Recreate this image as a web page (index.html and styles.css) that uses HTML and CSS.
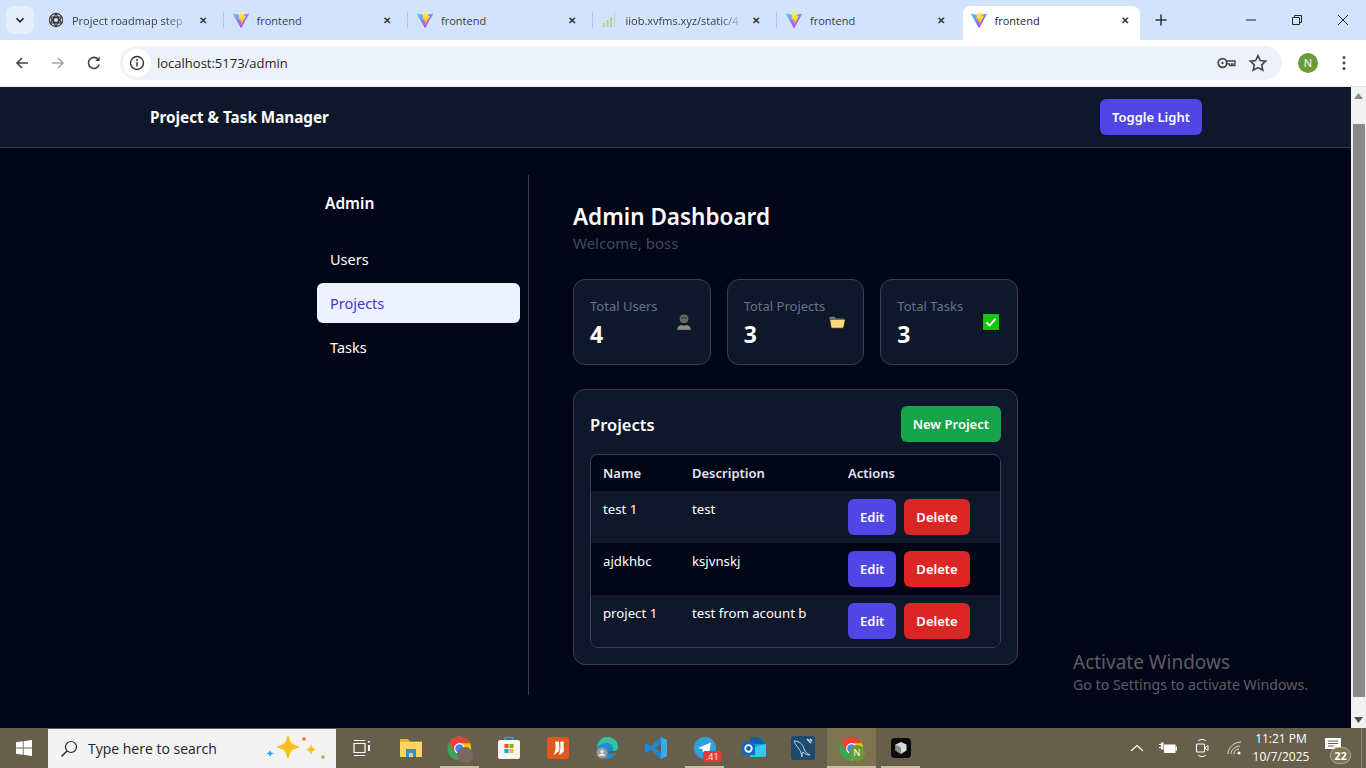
FILE: index.html
```html
<!DOCTYPE html>
<html lang="en">
<head>
    <meta charset="UTF-8">
    <meta name="viewport" content="width=device-width, initial-scale=1.0">
    <title>frontend</title>
    <link rel="stylesheet" href="styles.css">
</head>
<body>
    <svg class="defs" width="0" height="0">
        <defs>
            <linearGradient id="viteA" x1="0" y1="0" x2="0.6" y2="1">
                <stop offset="0" stop-color="#41d1ff"/>
                <stop offset="1" stop-color="#bd34fe"/>
            </linearGradient>
            <linearGradient id="viteB" x1="0.4" y1="0" x2="0.5" y2="1">
                <stop offset="0" stop-color="#ffea83"/>
                <stop offset="0.4" stop-color="#ffdd35"/>
                <stop offset="1" stop-color="#ffa800"/>
            </linearGradient>
            <symbol id="vite" viewBox="0 0 256 257">
                <path fill="url(#viteA)" d="M255.153 37.938L134.897 252.976c-2.483 4.44-8.862 4.466-11.382.048L.875 37.958c-2.746-4.814 1.371-10.646 6.827-9.67l120.385 21.517a6.537 6.537 0 002.322-.004l117.867-21.483c5.438-.991 9.574 4.796 6.877 9.62z"/>
                <path fill="url(#viteB)" d="M185.432.063L96.44 17.501a3.268 3.268 0 00-2.634 3.014l-5.474 92.456a3.268 3.268 0 003.997 3.378l24.777-5.718c2.318-.535 4.413 1.507 3.936 3.838l-7.361 36.047c-.495 2.426 1.782 4.5 4.151 3.78l15.304-4.649c2.372-.72 4.652 1.36 4.15 3.788l-11.698 56.621c-.732 3.542 3.979 5.473 5.943 2.437l1.313-2.028 72.516-144.72c1.215-2.423-.88-5.186-3.54-4.672l-25.505 4.922c-2.396.462-4.435-1.77-3.759-4.114l16.646-57.705c.677-2.35-1.37-4.583-3.769-4.113z"/>
            </symbol>
            <symbol id="chromeLogo" viewBox="0 0 24 24">
                <circle cx="12" cy="12" r="11.5" fill="#34a853"/>
                <path fill="#ea4335" d="M12 .5A11.5 11.5 0 002 6.3l5 8.7L12 7h10A11.5 11.5 0 0012 .5z"/>
                <path fill="#fbbc04" d="M22 7H12l3.5 6-3.5 10.5A11.5 11.5 0 0022 7z"/>
                <circle cx="12" cy="12" r="5.2" fill="#fff"/>
                <circle cx="12" cy="12" r="4.1" fill="#4285f4"/>
            </symbol>
        </defs>
    </svg>

    <div class="tabstrip">
        <div class="tab-menu">
            <svg width="10" height="10" viewBox="0 0 10 10"><path d="M1.5 3.2L5 6.8l3.5-3.6" fill="none" stroke="#1f1f1f" stroke-width="1.6"/></svg>
        </div>
        <div class="tab">
            <svg class="favicon" viewBox="0 0 16 16"><g fill="none" stroke="#333" stroke-width="1.1"><circle cx="8" cy="8" r="6.6"/><path d="M8 1.5l5.5 9.5H2.5zM8 14.5L2.5 5h11z"/><circle cx="8" cy="8" r="2.6"/></g></svg>
            <span class="tab-title tab-fade">Project roadmap step</span>
            <span class="tab-close">✕</span>
        </div>
        <div class="tab tab-sep">
            <svg class="favicon"><use href="#vite"/></svg>
            <span class="tab-title">frontend</span>
            <span class="tab-close">✕</span>
        </div>
        <div class="tab tab-sep">
            <svg class="favicon"><use href="#vite"/></svg>
            <span class="tab-title">frontend</span>
            <span class="tab-close">✕</span>
        </div>
        <div class="tab tab-sep">
            <svg class="favicon" viewBox="0 0 16 16"><g fill="#a9d3a0"><rect x="1" y="11" width="2" height="4"/><rect x="4.5" y="8" width="2" height="7"/><rect x="8" y="5" width="2" height="10"/><rect x="11.5" y="1" width="2" height="14" fill="#c6dcc2"/></g></svg>
            <span class="tab-title tab-fade">iiob.xvfms.xyz/static/4</span>
            <span class="tab-close">✕</span>
        </div>
        <div class="tab tab-sep">
            <svg class="favicon"><use href="#vite"/></svg>
            <span class="tab-title">frontend</span>
            <span class="tab-close">✕</span>
        </div>
        <div class="tab tab-active">
            <svg class="favicon"><use href="#vite"/></svg>
            <span class="tab-title">frontend</span>
            <span class="tab-close">✕</span>
        </div>
        <div class="tab-new">
            <svg width="12" height="12" viewBox="0 0 12 12"><path d="M6 .5v11M.5 6h11" stroke="#333" stroke-width="1.5"/></svg>
        </div>
        <div class="win-controls">
            <svg width="46" height="16" viewBox="0 0 46 16"><path d="M18 8h10" stroke="#222" stroke-width="1"/></svg>
            <svg width="46" height="16" viewBox="0 0 46 16"><path d="M18.5 5.5h7v7h-7zM20.5 5.5v-2h7v7h-2" fill="none" stroke="#222" stroke-width="1"/></svg>
            <svg width="46" height="16" viewBox="0 0 46 16"><path d="M18 3l10 10M28 3L18 13" stroke="#222" stroke-width="1"/></svg>
        </div>
    </div>

    <div class="toolbar">
        <svg class="nav-icon" viewBox="0 0 16 16"><path d="M14 8H3M8 3L3 8l5 5" fill="none" stroke="#444" stroke-width="1.6"/></svg>
        <svg class="nav-icon" viewBox="0 0 16 16"><path d="M2 8h11M8 3l5 5-5 5" fill="none" stroke="#a6a6a6" stroke-width="1.6"/></svg>
        <svg class="nav-icon" viewBox="0 0 16 16"><path d="M13.2 9.5A5.5 5.5 0 1112 4.2" fill="none" stroke="#444" stroke-width="1.6"/><path d="M13.6 1.5v4.4H9.2z" fill="#444"/></svg>
        <div class="omnibox">
            <span class="site-info">
                <svg width="16" height="16" viewBox="0 0 16 16"><circle cx="8" cy="8" r="6.5" fill="none" stroke="#333" stroke-width="1.4"/><path d="M8 7v4.5" stroke="#333" stroke-width="1.5"/><circle cx="8" cy="4.9" r="1" fill="#333"/></svg>
            </span>
            <span class="url">localhost:5173/admin</span>
            <svg class="omni-icon" viewBox="0 0 20 20"><circle cx="6.5" cy="10" r="4.3" fill="none" stroke="#444" stroke-width="1.7"/><circle cx="6.5" cy="10" r="1.2" fill="#444"/><path d="M10.5 8h8.5v4.5h-2V11h-1.5v1.5h-2V10.8h-3z" fill="none" stroke="#444" stroke-width="1.3"/></svg>
            <svg class="omni-icon" viewBox="0 0 20 20"><path d="M10 2.6l2.3 5 5.4.6-4 3.7 1.1 5.4L10 14.6l-4.8 2.7 1.1-5.4-4-3.7 5.4-.6z" fill="none" stroke="#444" stroke-width="1.6"/></svg>
        </div>
        <span class="avatar">N</span>
        <svg class="kebab" viewBox="0 0 4 16"><circle cx="2" cy="2.5" r="1.5"/><circle cx="2" cy="8" r="1.5"/><circle cx="2" cy="13.5" r="1.5"/></svg>
    </div>

    <div class="viewport">
        <div class="page">
            <header class="topbar">
                <div class="brand">Project &amp; Task Manager</div>
                <button class="btn btn-indigo">Toggle Light</button>
            </header>
            <div class="layout">
                <aside class="sidebar">
                    <div class="side-title">Admin</div>
                    <nav class="side-nav">
                        <a class="side-link">Users</a>
                        <a class="side-link side-link-active">Projects</a>
                        <a class="side-link">Tasks</a>
                    </nav>
                </aside>
                <main class="content">
                    <h1>Admin Dashboard</h1>
                    <p class="welcome">Welcome, boss</p>
                    <section class="stats">
                        <div class="stat">
                            <div>
                                <div class="stat-label">Total Users</div>
                                <div class="stat-value">4</div>
                            </div>
                            <svg class="stat-icon" viewBox="0 0 16 16"><circle cx="8" cy="5.2" r="4.4" fill="#666" stroke="#111" stroke-width=".8"/><path d="M1.5 15.4c0-1 .2-4.4 4-5.2 1.5.8 3.5.8 5 0 3.8.8 4 4.2 4 5.2z" fill="#8a8a8a" stroke="#111" stroke-width=".8"/><path d="M5.2 4.4h5.6" stroke="#333" stroke-width="1"/></svg>
                        </div>
                        <div class="stat">
                            <div>
                                <div class="stat-label">Total Projects</div>
                                <div class="stat-value">3</div>
                            </div>
                            <svg class="stat-icon" viewBox="0 0 16 16"><path d="M1 3h5l1 1.5h7v2H1z" fill="#4f8fb0" stroke="#111" stroke-width=".6"/><path d="M1.5 5.5H15.5L13.8 13.5H2.8z" fill="#fdd77a" stroke="#111" stroke-width=".6"/></svg>
                        </div>
                        <div class="stat">
                            <div>
                                <div class="stat-label">Total Tasks</div>
                                <div class="stat-value">3</div>
                            </div>
                            <svg class="stat-icon" viewBox="0 0 16 16"><rect x=".5" y=".5" width="15" height="15" fill="#16c60c" stroke="#0b0b0b" stroke-width=".8"/><path d="M4 8.3l2.8 2.7L12 5.3" fill="none" stroke="#fff" stroke-width="1.6"/></svg>
                        </div>
                    </section>
                    <section class="panel">
                        <div class="panel-head">
                            <h2>Projects</h2>
                            <button class="btn btn-green">New Project</button>
                        </div>
                        <div class="table-wrap">
                            <table>
                                <thead>
                                    <tr><th class="col-name">Name</th><th class="col-desc">Description</th><th>Actions</th></tr>
                                </thead>
                                <tbody>
                                    <tr>
                                        <td>test 1</td>
                                        <td>test</td>
                                        <td><button class="btn btn-indigo">Edit</button><button class="btn btn-red">Delete</button></td>
                                    </tr>
                                    <tr>
                                        <td>ajdkhbc</td>
                                        <td>ksjvnskj</td>
                                        <td><button class="btn btn-indigo">Edit</button><button class="btn btn-red">Delete</button></td>
                                    </tr>
                                    <tr>
                                        <td>project 1</td>
                                        <td>test from acount b</td>
                                        <td><button class="btn btn-indigo">Edit</button><button class="btn btn-red">Delete</button></td>
                                    </tr>
                                </tbody>
                            </table>
                        </div>
                    </section>
                </main>
            </div>
        </div>
        <div class="scrollbar">
            <div class="sb-arrow">
                <svg width="9" height="6" viewBox="0 0 9 6"><path d="M4.5 0L9 6H0z" fill="#8a8a8a"/></svg>
            </div>
            <div class="sb-track"><div class="sb-thumb"></div></div>
            <div class="sb-arrow">
                <svg width="9" height="6" viewBox="0 0 9 6"><path d="M4.5 6L9 0H0z" fill="#505050"/></svg>
            </div>
        </div>
        <div class="watermark">
            <div class="wm-title">Activate Windows</div>
            <div class="wm-sub">Go to Settings to activate Windows.</div>
        </div>
    </div>

    <div class="taskbar">
        <div class="start">
            <svg width="16" height="16" viewBox="0 0 16 16"><path fill="#fff" d="M0 2.3l6.8-1v6.3H0zM7.6 1.2L16 0v7.6H7.6zM0 8.4h6.8v6.3l-6.800-1zM7.6 8.4H16V16l-8.400-1.200z"/></svg>
        </div>
        <div class="search">
            <svg width="18" height="18" viewBox="0 0 18 18"><circle cx="11" cy="7" r="5.5" fill="none" stroke="#222" stroke-width="1.2"/><path d="M7 11l-5.5 5.5" stroke="#222" stroke-width="1.4"/></svg>
            <span class="search-text">Type here to search</span>
            <svg class="search-art" width="62" height="28" viewBox="0 0 62 28">
                <path fill="#fbbf1d" stroke="#fbbf1d" stroke-width="1.5" stroke-linejoin="round" d="M23 1.5c1.5 7 3.5 9 10.5 10.5-7 1.500-9 3.500-10.500 10.500-1.500-7-3.500-9-10.500-10.500 7-1.500 9-3.500 10.500-10.500z"/>
                <path fill="#fbbf1d" d="M46 9c.7 3 1.600 4 5 5.500-3.400 1.500-4.300 2.500-5 5.500-.7-3-1.600-4-5-5.500 3.400-1.500 4.300-2.500 5-5.500z"/>
                <path fill="#26a9ef" d="M5 15c.5 2 1 2.700 4 3.500-3 .8-3.500 1.500-4 3.500-.5-2-1-2.700-4-3.500 3-.8 3.500-1.500 4-3.500z"/>
                <circle cx="39" cy="4" r="1.8" fill="#e8623a"/>
                <circle cx="58" cy="22" r="1.8" fill="#8cc63f"/>
            </svg>
        </div>
        <div class="tb-apps">
            <div class="tb-app">
                <svg width="20" height="20" viewBox="0 0 20 20"><g fill="none" stroke="#fff" stroke-width="1.2"><path d="M2 5.5h11v9H2zM2 2.5h11M2 17.5h11"/></g><path d="M16 3h2v1.500h-2zM16 7h2v6h-2z" fill="#fff"/></svg>
            </div>
            <div class="tb-app">
                <svg width="24" height="20" viewBox="0 0 24 20"><path d="M1 1h8l2 2.500h12V8H1z" fill="#e8b33c"/><path d="M1 4h22v15H1z" fill="#fcd462"/><path d="M7 11h10v8H7z" fill="#2b8fd8"/><path d="M10 15h4v4h-4z" fill="#fcd462"/></svg>
            </div>
            <div class="tb-app tb-open">
                <svg width="25" height="25"><use href="#chromeLogo"/></svg>
                <span class="tb-face"></span>
            </div>
            <div class="tb-app">
                <svg width="24" height="24" viewBox="0 0 24 24"><path d="M8 4V2.500a1 1 0 011-1h6a1 1 0 011 1V4" fill="none" stroke="#27a9e0" stroke-width="1.5"/><rect x="1" y="4" width="22" height="19" rx="2" fill="#f5f5f5"/><rect x="7.5" y="8" width="4" height="4" fill="#f25022"/><rect x="12.5" y="8" width="4" height="4" fill="#7fba00"/><rect x="7.5" y="13" width="4" height="4" fill="#00a4ef"/><rect x="12.5" y="13" width="4" height="4" fill="#ffb900"/></svg>
            </div>
            <div class="tb-app">
                <svg width="22" height="22" viewBox="0 0 22 22"><rect width="22" height="22" rx="2" fill="#dd5a1c"/><path d="M6 18c3-3 3-9 2-13 2-1 3-1 4 0 0 3 1 6 0 9-2 2-4 3-6 4zM13 5c2-1 3-1 4 0-1 4 0 7 0 9-1 2-3 3-5 4 1-4 2-9 1-13z" fill="#fdf3ec"/></svg>
            </div>
            <div class="tb-app">
                <svg width="24" height="24" viewBox="0 0 24 24"><path d="M2 11C3 4 8 1 12 1c6 0 11 4 11 10 0 3-2 4-5 4h-6c1 3 5 4 9 2-2 4-6 6-9 6C6 23 1 18 2 11z" fill="#1f8dd6"/><path d="M2 11C3 4 8 1 12 1c6 0 11 4 11 10 0 3-2 4-5 4 1-5-3-9-7-8-4 .5-7 2-9 4z" fill="#35c1a0"/><circle cx="7" cy="17" r="5.5" fill="#9a9a9a"/><circle cx="7" cy="15.5" r="1.8" fill="#e8e8e8"/><path d="M3.500 20c.5-2 2-2.500 3.500-2.500s3 .5 3.500 2.500z" fill="#e8e8e8"/></svg>
            </div>
            <div class="tb-app">
                <svg width="24" height="24" viewBox="0 0 24 24"><path d="M17 1l6 3v16l-6 3L7 13.500 2.800 17 1 16V8l1.800-1L7 10.500z" fill="#1f8ad2"/><path d="M17 7l-5.500 5 5.500 5z" fill="#665f4c"/><path d="M17 1l6 3v16l-6 3z" fill="#38a8ea"/></svg>
            </div>
            <div class="tb-app tb-open">
                <svg width="24" height="24" viewBox="0 0 24 24"><circle cx="12" cy="12" r="11" fill="#2ba3dc"/><path d="M5 12l13-5.500-2 11-4-3-2 2-.5-3.500z" fill="#fff"/></svg>
                <span class="tb-count">.41</span>
            </div>
            <div class="tb-app">
                <svg width="24" height="24" viewBox="0 0 24 24"><path d="M8 1h9l7 7v11a2 2 0 01-2 2H8z" fill="#1f9be0"/><path d="M8 1h9v7H8zM17 1l7 7h-7z" fill="#0f5fb0"/><path d="M8 12l16-4v11a2 2 0 01-2 2H8z" fill="#37c6ee"/><rect x="0" y="6" width="13" height="13" rx="1.5" fill="#0f6cbd"/><circle cx="6.5" cy="12.5" r="3.3" fill="none" stroke="#fff" stroke-width="1.7"/></svg>
            </div>
            <div class="tb-app">
                <svg width="24" height="24" viewBox="0 0 24 24"><rect width="24" height="24" rx="3" fill="#1f4a70"/><path d="M3 5c5 0 9 3 10 8 1 3 3 5 6 6-3 0-5-1-7-3-1 1-1 3-1 5-1-3-1-6-3-8-2-3-4-5-5-8z" fill="none" stroke="#b9cfdf" stroke-width="1"/><path d="M16 3l4 4M19 3l2 2" stroke="#d8e6ef" stroke-width="1.5"/></svg>
            </div>
            <div class="tb-app tb-open tb-active">
                <svg width="25" height="25"><use href="#chromeLogo"/></svg>
                <span class="tb-profile">N</span>
            </div>
            <div class="tb-app tb-open">
                <svg width="20" height="20" viewBox="0 0 20 20"><rect width="20" height="20" rx="4" fill="#0a0a0a"/><path d="M10 4l5.500 2.500v6L10 16l-5.500-3.500v-6z" fill="#d8d8d8"/><path d="M10 9.500V16l-5.500-3.500v-6z" fill="#8c8c8c"/></svg>
            </div>
        </div>
        <div class="tray">
            <svg class="tray-chev" viewBox="0 0 14 8"><path d="M1 7l6-5.500L13 7" fill="none" stroke="#fff" stroke-width="1.1"/></svg>
            <svg class="tray-batt" viewBox="0 0 18 12"><path d="M0 2.500h2M0 5.500h2" stroke="#fff" stroke-width="1"/><path d="M2 .5h2.500v7H2z" fill="#fff"/><rect x="5" y="2.500" width="11.500" height="8.500" fill="#fff"/><rect x="16.500" y="4.500" width="1.500" height="4" fill="#fff"/></svg>
            <svg class="tray-meet" viewBox="0 0 14 20"><path d="M3 3C5 1 9 1 11 3M3 17c2 2 6 2 8 0" fill="none" stroke="#fff" stroke-width="1"/><rect x="1.5" y="6" width="8" height="8" rx="1" fill="none" stroke="#fff" stroke-width="1.1"/><path d="M9.500 10l3.500-2.500v5z" fill="none" stroke="#fff" stroke-width="1"/></svg>
            <svg class="tray-wifi" viewBox="0 0 16 16"><g fill="none" stroke="#ddd" stroke-width="1"><path d="M1 14C1 8 7 2 14 2"/><path d="M4 14c0-4 4-8 9-8"/><path d="M7 14c0-3 2-5 5-5"/></g><circle cx="12" cy="13" r="1.5" fill="#fff"/></svg>
            <div class="clock">
                <div>11:21 PM</div>
                <div>10/7/2025</div>
            </div>
            <div class="notif">
                <svg width="16" height="14" viewBox="0 0 16 14"><path d="M0 0h16v11H0z" fill="#fff"/><path d="M3 3h10M3 5.500h10M3 8h6" stroke="#665f4c" stroke-width="1"/></svg>
                <span class="notif-badge">22</span>
            </div>
            <div class="show-desktop"></div>
        </div>
    </div>
</body>
</html>
```

FILE: styles.css
```css
* {
    box-sizing: border-box;
}
html, body {
    height: 100%;
}
body {
    margin: 0;
    display: flex;
    flex-direction: column;
    overflow: hidden;
    font-family: "Noto Sans", "Open Sans", Arial, sans-serif;
    background-color: #020617;
    color: #fff;
}
.defs {
    position: absolute;
}

/* browser chrome */
.tabstrip {
    height: 40px;
    flex: none;
    display: flex;
    align-items: flex-end;
    padding-left: 6px;
    background-color: #d3e3fd;
    font-family: "Open Sans", "Noto Sans", sans-serif;
}
.tab-menu {
    width: 28px;
    height: 28px;
    margin: 0 4px 6px 0;
    display: flex;
    align-items: center;
    justify-content: center;
    border-radius: 8px;
    background-color: #e6eefc;
}
.tab {
    width: 184.5px;
    height: 34px;
    padding: 0 16px 6px 10px;
    display: flex;
    align-items: center;
    gap: 8px;
    position: relative;
    font-size: 11px;
    color: #3c4043;
}
.tab-sep::before {
    content: "";
    position: absolute;
    left: 0;
    top: 6px;
    width: 1px;
    height: 16px;
    background-color: #a8c7fa;
}
.tab-active {
    width: 177.5px;
    margin-left: 2px;
    padding: 0 11px 6px 8px;
    background-color: #fff;
    border-radius: 8px 8px 0 0;
    color: #1f1f1f;
}
.favicon {
    width: 16px;
    height: 16px;
    flex: none;
}
.tab-title {
    flex: 1;
    min-width: 0;
    overflow: hidden;
    white-space: nowrap;
}
.tab-fade {
    -webkit-mask-image: linear-gradient(90deg, #000 80%, transparent);
    mask-image: linear-gradient(90deg, #000 80%, transparent);
}
.tab-close {
    font-size: 10px;
    font-weight: 700;
    color: #333;
}
.tab-new {
    width: 28px;
    height: 28px;
    margin: 0 0 6px 7px;
    display: flex;
    align-items: center;
    justify-content: center;
}
.win-controls {
    margin-left: auto;
    height: 40px;
    display: flex;
    align-items: center;
}
.toolbar {
    height: 47px;
    flex: none;
    display: flex;
    align-items: center;
    padding: 0 0 1px 14px;
    gap: 20px;
    background-color: #fff;
    border-bottom: 1px solid #e4e6ea;
}
.nav-icon {
    width: 16px;
    height: 16px;
    flex: none;
}
.omnibox {
    width: 1162px;
    height: 34px;
    margin-left: -2px;
    padding: 0 14px 0 3px;
    display: flex;
    align-items: center;
    gap: 12px;
    border-radius: 17px;
    background-color: #edf2fa;
}
.site-info {
    width: 28px;
    height: 28px;
    display: flex;
    align-items: center;
    justify-content: center;
    border-radius: 50%;
    background-color: #fff;
}
.url {
    flex: 1;
    font-size: 13px;
    font-family: "Open Sans", sans-serif;
    color: #1f1f1f;
    margin-left: -6px;
}
.omni-icon {
    width: 20px;
    height: 20px;
}
.avatar {
    width: 20px;
    height: 20px;
    margin-left: -4px;
    border-radius: 50%;
    background-color: #6b9b37;
    color: #fff;
    font-size: 11px;
    line-height: 20px;
    text-align: center;
    flex: none;
}
.kebab {
    width: 4px;
    height: 16px;
    fill: #444;
    flex: none;
    margin-left: 4px;
}

/* page */
.viewport {
    flex: 1;
    min-height: 0;
    display: flex;
    position: relative;
}
.page {
    flex: 1;
    min-width: 0;
}
.topbar {
    height: 61px;
    padding: 0 149px 0 150px;
    display: flex;
    align-items: center;
    justify-content: space-between;
    background-color: #0f172a;
    border-bottom: 1px solid #334155;
}
.brand {
    font-size: 15.25px;
    font-weight: 700;
}
.btn {
    height: 36px;
    padding: 0 12px;
    border: none;
    border-radius: 6px;
    color: #fff;
    font-family: inherit;
    font-size: 13px;
    font-weight: 600;
}
.btn-indigo {
    background-color: #4f46e5;
}
.btn-green {
    background-color: #16a34a;
}
.btn-red {
    background-color: #dc2626;
    margin-left: 8px;
}
.layout {
    display: flex;
    padding: 27px 0 0 317px;
}
.sidebar {
    width: 212px;
    height: 520px;
    padding-right: 8px;
    border-right: 1px solid #334155;
}
.side-title {
    padding: 17px 8px 0;
    font-size: 15.5px;
    line-height: 22px;
    font-weight: 600;
}
.side-nav {
    margin-top: 25px;
    display: flex;
    flex-direction: column;
    gap: 4px;
}
.side-link {
    height: 40px;
    padding: 0 13px;
    display: flex;
    align-items: center;
    border-radius: 6px;
    font-size: 14.5px;
}
.side-link-active {
    background-color: #eef2ff;
    color: #4338ca;
}
.content {
    width: 489px;
    padding: 26px 0 0 44px;
}
h1 {
    margin: 0;
    font-size: 22.5px;
    line-height: 32px;
    font-weight: 600;
}
.welcome {
    margin: -1px 0 0;
    font-size: 15px;
    line-height: 22px;
    color: #3d4b60;
}
.stats {
    margin-top: 25px;
    display: grid;
    grid-template-columns: repeat(3, 1fr);
    gap: 16px;
}
.stat {
    height: 86px;
    padding: 16px;
    display: flex;
    align-items: flex-start;
    justify-content: space-between;
    border: 1px solid #334155;
    border-radius: 12px;
    background-color: #0f172a;
}
.stat-label {
    font-size: 13px;
    line-height: 20px;
    color: #64748b;
}
.stat-value {
    margin-top: 2px;
    font-size: 23px;
    line-height: 32px;
    font-weight: 700;
}
.stat-icon {
    width: 18px;
    height: 18px;
    flex: none;
    margin: 17px 1px 0 0;
}
.panel {
    margin-top: 24px;
    padding: 16px;
    border: 1px solid #334155;
    border-radius: 12px;
    background-color: #0f172a;
}
.panel-head {
    display: flex;
    align-items: center;
    justify-content: space-between;
    margin-bottom: 12px;
}
h2 {
    margin: 0;
    font-size: 16.5px;
    font-weight: 600;
}
.table-wrap {
    border: 1px solid #334155;
    border-radius: 8px;
    overflow: hidden;
}
table {
    width: 100%;
    border-collapse: collapse;
    table-layout: fixed;
    font-size: 13.2px;
}
th, td {
    padding: 8px 12px;
    line-height: 20px;
    text-align: left;
    vertical-align: top;
}
th {
    font-size: 13px;
    font-weight: 600;
    background-color: #020617;
    color: #e2e8f0;
}
.col-name {
    width: 89px;
}
.col-desc {
    width: 156px;
}
tbody tr:nth-child(odd) td {
    background-color: #0f172a;
}
tbody tr:nth-child(even) td {
    background-color: #020617;
}

/* scrollbar */
.scrollbar {
    width: 15px;
    flex: none;
    display: flex;
    flex-direction: column;
    background-color: #f1f1f1;
}
.sb-arrow {
    height: 17px;
    display: flex;
    align-items: center;
    justify-content: center;
}
.sb-track {
    flex: 1;
    padding-top: 20px;
}
.sb-thumb {
    height: 573px;
    margin-left: 2px;
    margin-right: 1px;
    background-color: #8a8a8a;
}
.watermark {
    position: absolute;
    left: 1073px;
    top: 563px;
    color: rgba(255, 255, 255, 0.36);
}
.wm-title {
    font-size: 19px;
    line-height: 24px;
}
.wm-sub {
    font-size: 14.2px;
    line-height: 22px;
}

/* taskbar */
.taskbar {
    height: 40px;
    flex: none;
    display: flex;
    background-color: #665f4c;
    font-family: "Open Sans", "Noto Sans", sans-serif;
}
.start {
    width: 48px;
    display: flex;
    align-items: center;
    justify-content: center;
}
.search {
    width: 288px;
    margin-top: 1px;
    padding-left: 12px;
    display: flex;
    align-items: center;
    background-color: #f3f3f3;
    color: #222;
    font-size: 14px;
}
.search-text {
    margin-left: 10px;
    flex: 1;
}
.search-art {
    margin-right: 9px;
}
.tb-apps {
    display: flex;
    margin-left: 1px;
}
.tb-app {
    width: 49px;
    height: 40px;
    display: flex;
    align-items: center;
    justify-content: center;
    position: relative;
}
.tb-open::after {
    content: "";
    position: absolute;
    left: 5px;
    right: 5px;
    bottom: 0;
    height: 2px;
    background-color: #c7bf9f;
}
.tb-active {
    background-color: #7e7350;
}
.tb-active::after {
    left: 0;
    right: 0;
}
.tb-face {
    position: absolute;
    left: 22px;
    top: 19px;
    width: 16px;
    height: 16px;
    border-radius: 50%;
    background-color: #7a6a62;
}
.tb-count {
    position: absolute;
    left: 23px;
    top: 23px;
    padding: 0 3px;
    border-radius: 3px;
    background-color: #e53935;
    color: #fff;
    font-size: 9px;
    line-height: 11px;
}
.tb-profile {
    position: absolute;
    left: 22px;
    top: 17px;
    width: 16px;
    height: 16px;
    border-radius: 50%;
    background-color: #6b9b37;
    color: #fff;
    font-size: 9px;
    line-height: 16px;
    text-align: center;
}
.tray {
    margin-left: auto;
    display: flex;
    align-items: center;
}
.tray-chev {
    width: 14px;
    height: 8px;
    margin-right: 15px;
}
.tray-batt {
    width: 18px;
    height: 12px;
    margin-right: 18px;
}
.tray-meet {
    width: 14px;
    height: 20px;
    margin-right: 18px;
}
.tray-wifi {
    width: 16px;
    height: 16px;
    margin-right: 7px;
}
.clock {
    width: 62px;
    text-align: center;
    font-size: 12px;
    line-height: 18px;
    color: #fff;
}
.notif {
    width: 42px;
    height: 40px;
    margin-left: 7px;
    padding-left: 6px;
    display: flex;
    align-items: center;
    position: relative;
}
.notif svg {
    margin-top: -6px;
}
.notif-badge {
    position: absolute;
    left: 11px;
    top: 19px;
    width: 21px;
    height: 17px;
    border-radius: 9px;
    background-color: #7e7350;
    border: 1px solid #b7ae8c;
    color: #fff;
    font-size: 11px;
    font-weight: 700;
    line-height: 15px;
    text-align: center;
}
.show-desktop {
    width: 5px;
    height: 40px;
    border-left: 1px solid #8a8371;
}
```
